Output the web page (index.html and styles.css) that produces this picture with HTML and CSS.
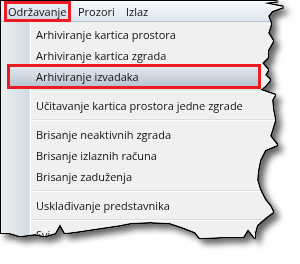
FILE: index.html
```html
<!DOCTYPE html>
<html lang="hr">
<head>
    <meta charset="UTF-8">
    <meta name="viewport" content="width=device-width, initial-scale=1.0">
    <title>Održavanje</title>
    <link rel="stylesheet" href="styles.css">
</head>
<body>
    <div class="torn">
        <div class="paper">
            <div class="menubar">
                <span class="top-item top-item--open">Održavanje</span>
                <span class="top-item top-item--prozori">Prozori</span>
                <span class="top-item">Izlaz</span>
            </div>
            <div class="menu">
                <div class="item">Arhiviranje kartica prostora</div>
                <div class="item">Arhiviranje kartica zgrada</div>
                <div class="item item--active">Arhiviranje izvadaka</div>
                <div class="sep"></div>
                <div class="item">Učitavanje kartica prostora jedne zgrade</div>
                <div class="sep"></div>
                <div class="item">Brisanje neaktivnih zgrada</div>
                <div class="item">Brisanje izlaznih računa</div>
                <div class="item">Brisanje zaduženja</div>
                <div class="sep"></div>
                <div class="item">Usklađivanje predstavnika</div>
                <div class="sep"></div>
                <div class="item">Svi obračuni i računi</div>
            </div>
        </div>
    </div>
</body>
</html>
```

FILE: styles.css
```css
body {
    margin: 0;
    padding: 1px 0 0 1px;
    background: #fff;
    font-family: "Open Sans", "Noto Sans", sans-serif;
    font-size: 11px;
    color: #111;
}

/* outline + shadow around the torn piece */
.torn {
    width: 292px;
    height: 250px;
    filter: drop-shadow(1px 0 0 #000) drop-shadow(0 1px 0 #000)
            drop-shadow(-1px 0 0 #000) drop-shadow(0 -1px 0 #000)
            drop-shadow(5px 5px 3px rgba(0, 0, 0, 0.6));
}

.paper {
    width: 292px;
    height: 250px;
    overflow: hidden;
    background: #f0f0f0;
    clip-path: polygon(
        0 0, 277px 0, 262px 2px, 282px 6px, 271px 10px, 267px 15px,
        270px 23px, 267px 32px, 272px 40px, 267px 49px, 267px 56px,
        261px 62px, 267px 69px, 264px 74px, 269px 79px, 264px 85px,
        259px 89px, 274px 94px, 271px 99px, 272px 109px, 274px 119px,
        271px 129px, 269px 135px, 276px 144px, 264px 149px, 259px 159px,
        257px 169px, 256px 179px, 259px 189px, 264px 199px, 269px 205px,
        272px 211px, 264px 217px, 256px 224px, 254px 231px, 254px 237px,
        247px 228px, 242px 236px, 220px 236px, 199px 237px, 194px 231px,
        181px 226px, 169px 222px, 149px 221px, 129px 222px, 119px 224px,
        99px 227px, 79px 230px, 64px 232px, 59px 223px, 54px 232px,
        44px 235px, 34px 233px, 19px 235px, 9px 232px, 0 232px
    );
}

.menubar {
    height: 20px;
    display: flex;
    align-items: center;
    padding-left: 6px;
    background: linear-gradient(#f8fafc, #dde6f0);
    border-bottom: 1px solid #b9c5d2;
}

.top-item {
    line-height: 15px;
    white-space: nowrap;
}

.top-item--open {
    width: 61px;
    padding-left: 1px;
    box-sizing: border-box;
    margin-right: 10px;
    outline: 3px solid #ec1c24;
    background: linear-gradient(#e9eef4, #d3dce7);
}

.top-item--prozori {
    width: 48px;
}

.menu {
    height: 240px;
    padding-top: 2px;
    background: linear-gradient(to right, #eceff2 0, #d2dbe6 28px, #e2e3e3 28px, #e2e3e3 29px, #fff 29px, #fff 30px, #f0f0f0 30px);
}

.item {
    height: 21px;
    display: flex;
    align-items: center;
    padding-left: 35px;
    white-space: nowrap;
}

.item--active {
    height: 19px;
    margin: 1px 35px 1px 9px;
    padding-left: 26px;
    background: linear-gradient(#e4e9ef, #b7c4d2);
    outline: 3px solid #ec1c24;
}

.sep {
    height: 8px;
    display: flex;
    align-items: center;
}

.sep::after {
    content: "";
    flex: 1;
    margin-left: 32px;
    border-top: 1px solid #dcdcdc;
    border-bottom: 1px solid #fff;
}
```
